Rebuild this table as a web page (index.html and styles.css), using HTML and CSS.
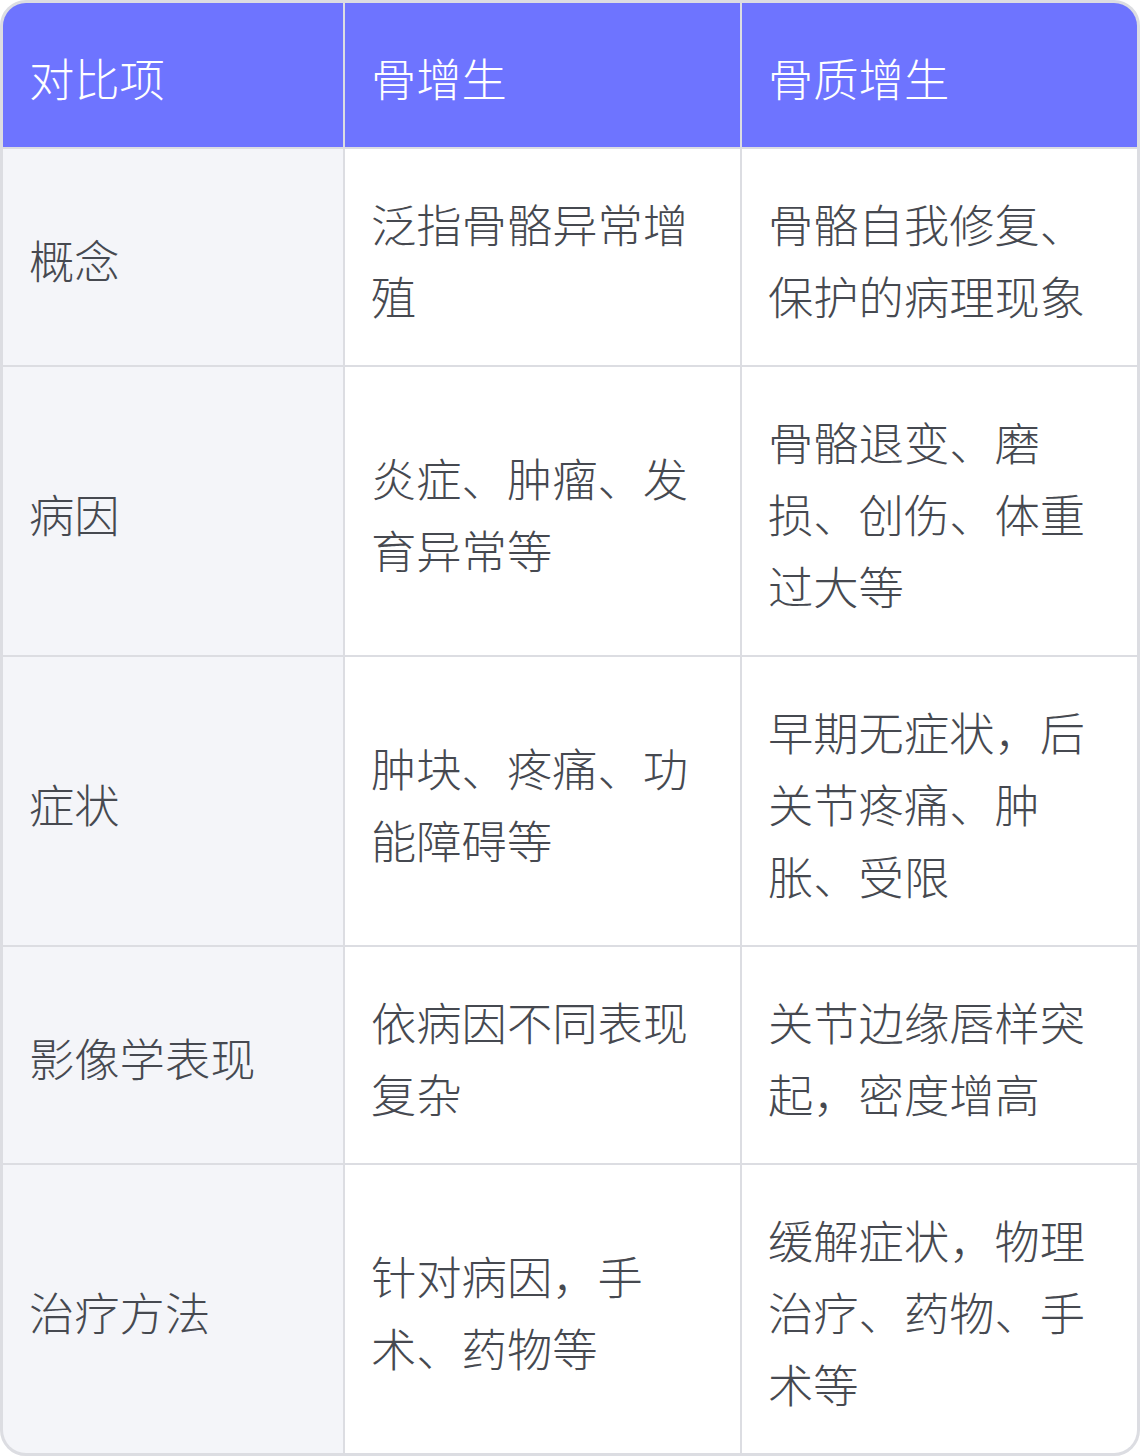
FILE: index.html
```html
<!DOCTYPE html>
<html lang="zh-CN">
<head>
<meta charset="utf-8">
<link rel="stylesheet" href="styles.css">
</head>
<body>
<div class="table">
  <div class="cell head">对比项</div>
  <div class="cell head">骨增生</div>
  <div class="cell head">骨质增生</div>

  <div class="cell label">概念</div>
  <div class="cell">泛指骨骼异常增殖</div>
  <div class="cell">骨骼自我修复、保护的病理现象</div>

  <div class="cell label">病因</div>
  <div class="cell">炎症、肿瘤、发育异常等</div>
  <div class="cell">骨骼退变、磨损、创伤、体重过大等</div>

  <div class="cell label">症状</div>
  <div class="cell">肿块、疼痛、功能障碍等</div>
  <div class="cell">早期无症状，后关节疼痛、肿胀、受限</div>

  <div class="cell label">影像学表现</div>
  <div class="cell">依病因不同表现复杂</div>
  <div class="cell">关节边缘唇样突起，密度增高</div>

  <div class="cell label">治疗方法</div>
  <div class="cell">针对病因，手术、药物等</div>
  <div class="cell">缓解症状，物理治疗、药物、手术等</div>
</div>
</body>
</html>
```

FILE: styles.css
```css
html, body {
  margin: 0;
  padding: 0;
  background: #ffffff;
}

.table {
  width: 1140px;
  height: 1456px;
  box-sizing: border-box;
  border: 3px solid #dcdde2;
  border-radius: 26px;
  overflow: hidden;
  display: grid;
  grid-template-columns: 340px 395px 395px;
  grid-auto-rows: auto;
  gap: 2px;
  background: #dcdde2;
  font-family: "Noto Sans CJK SC", "Noto Sans", sans-serif;
  font-weight: 300;
  font-size: 45.3px;
  line-height: 72px;
  color: #464950;
}

.cell {
  background: #ffffff;
  padding: 38px 26px 34px;
  display: flex;
  align-items: center;
  word-break: break-all;
}

.cell.head {
  background: #6e74ff;
  color: #ffffff;
}

.cell.label {
  background: #f4f5f9;
}
```
